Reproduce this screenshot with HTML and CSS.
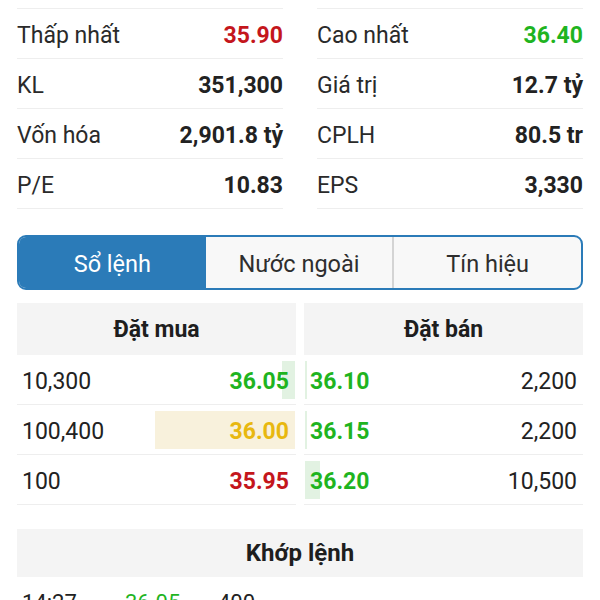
FILE: index.html
```html
<!DOCTYPE html>
<html lang="vi">
<head>
<meta charset="utf-8">
<link rel="stylesheet" href="styles.css">
</head>
<body>
<div class="page">
  <div class="stats">
    <div class="col">
      <div class="stat"><span class="label">Thấp nhất</span><span class="val red">35.90</span></div>
      <div class="stat"><span class="label">KL</span><span class="val">351,300</span></div>
      <div class="stat"><span class="label">Vốn hóa</span><span class="val">2,901.8 tỷ</span></div>
      <div class="stat"><span class="label">P/E</span><span class="val">10.83</span></div>
    </div>
    <div class="col">
      <div class="stat"><span class="label">Cao nhất</span><span class="val green">36.40</span></div>
      <div class="stat"><span class="label">Giá trị</span><span class="val">12.7 tỷ</span></div>
      <div class="stat"><span class="label">CPLH</span><span class="val">80.5 tr</span></div>
      <div class="stat"><span class="label">EPS</span><span class="val">3,330</span></div>
    </div>
  </div>

  <div class="tabs">
    <div class="tab active">Sổ lệnh</div>
    <div class="tab">Nước ngoài</div>
    <div class="tab sep">Tín hiệu</div>
  </div>

  <div class="book">
    <div class="side buy">
      <div class="head">Đặt mua</div>
      <div class="row bar-green" style="--w:13px"><span class="qty">10,300</span><span class="price green">36.05</span></div>
      <div class="row bar-yellow" style="--w:140px"><span class="qty">100,400</span><span class="price yellow">36.00</span></div>
      <div class="row"><span class="qty">100</span><span class="price red">35.95</span></div>
    </div>
    <div class="side sell">
      <div class="head">Đặt bán</div>
      <div class="row bar-green" style="--w:2px"><span class="price green">36.10</span><span class="qty">2,200</span></div>
      <div class="row bar-green" style="--w:2px"><span class="price green">36.15</span><span class="qty">2,200</span></div>
      <div class="row bar-green" style="--w:15px"><span class="price green">36.20</span><span class="qty">10,500</span></div>
    </div>
  </div>

  <div class="match">
    <div class="head">Khớp lệnh</div>
    <div class="trade"><span class="t-time">14:27</span><span class="t-price green">36.05</span><span class="t-vol">400</span></div>
  </div>
</div>
</body>
</html>
```

FILE: styles.css
```css
html, body {
  margin: 0;
  padding: 0;
  background: #ffffff;
  overflow: hidden;
}
body {
  font-family: Roboto, "Noto Sans", "Liberation Sans", sans-serif;
  color: #222222;
}
.page {
  padding: 8px 17px 0 17px;
}
.stats {
  display: grid;
  grid-template-columns: 1fr 1fr;
  column-gap: 34px;
}
.stat {
  height: 50px;
  box-sizing: border-box;
  padding-top: 3px;
  display: flex;
  align-items: center;
  justify-content: space-between;
  border-bottom: 1px solid #eeeeee;
  font-size: 23px;
}
.col .stat:first-child {
  border-top: 1px solid #eeeeee;
  height: 51px;
}
.label {
  color: #2a2a2a;
}
.val {
  font-weight: 700;
  color: #222222;
}
.red { color: #c4161c; }
.green { color: #1fb41f; }
.yellow { color: #e8b810; }

.tabs {
  margin-top: 26px;
  display: flex;
  height: 51px;
  border: 2px solid #2b7bb8;
  border-radius: 9px;
  overflow: hidden;
  background: #f8f8f8;
}
.tab {
  flex: 1;
  display: flex;
  align-items: center;
  justify-content: center;
  padding-top: 2px;
  font-size: 23.5px;
  color: #2e2e2e;
}
.tab.active {
  background: #2b7bb8;
  color: #ffffff;
}
.tab.sep {
  border-left: 2px solid #d4d4d4;
}

.book {
  margin-top: 13px;
  display: grid;
  grid-template-columns: 1fr 1fr;
  column-gap: 8px;
}
.head {
  height: 52px;
  display: flex;
  align-items: center;
  justify-content: center;
  background: #f4f4f4;
  font-size: 23px;
  font-weight: 700;
  color: #1e1e1e;
}
.row {
  height: 49px;
  box-sizing: content-box;
  display: flex;
  align-items: center;
  justify-content: space-between;
  border-bottom: 1px solid #eeeeee;
  font-size: 23px;
  background-repeat: no-repeat;
}
.buy .row {
  padding: 3px 7px 0 5px;
  height: 46px;
  background-position: right 1px center;
  background-size: var(--w, 0) 38px;
}
.sell .row {
  padding: 3px 6px 0 6px;
  height: 46px;
  background-position: left 1px center;
  background-size: var(--w, 0) 38px;
}
.bar-green {
  background-image: linear-gradient(#e2f2e2, #e2f2e2);
}
.bar-yellow {
  background-image: linear-gradient(#f8f1dc, #f8f1dc);
}
.qty {
  color: #222222;
}
.price {
  font-weight: 700;
}

.match {
  margin-top: 24px;
}
.match .head {
  height: 48px;
  font-size: 24px;
}
.trade {
  height: 50px;
  display: flex;
  align-items: center;
  padding-left: 5px;
  font-size: 22px;
}
.t-time { width: 103px; }
.t-price { width: 93px; }
```
